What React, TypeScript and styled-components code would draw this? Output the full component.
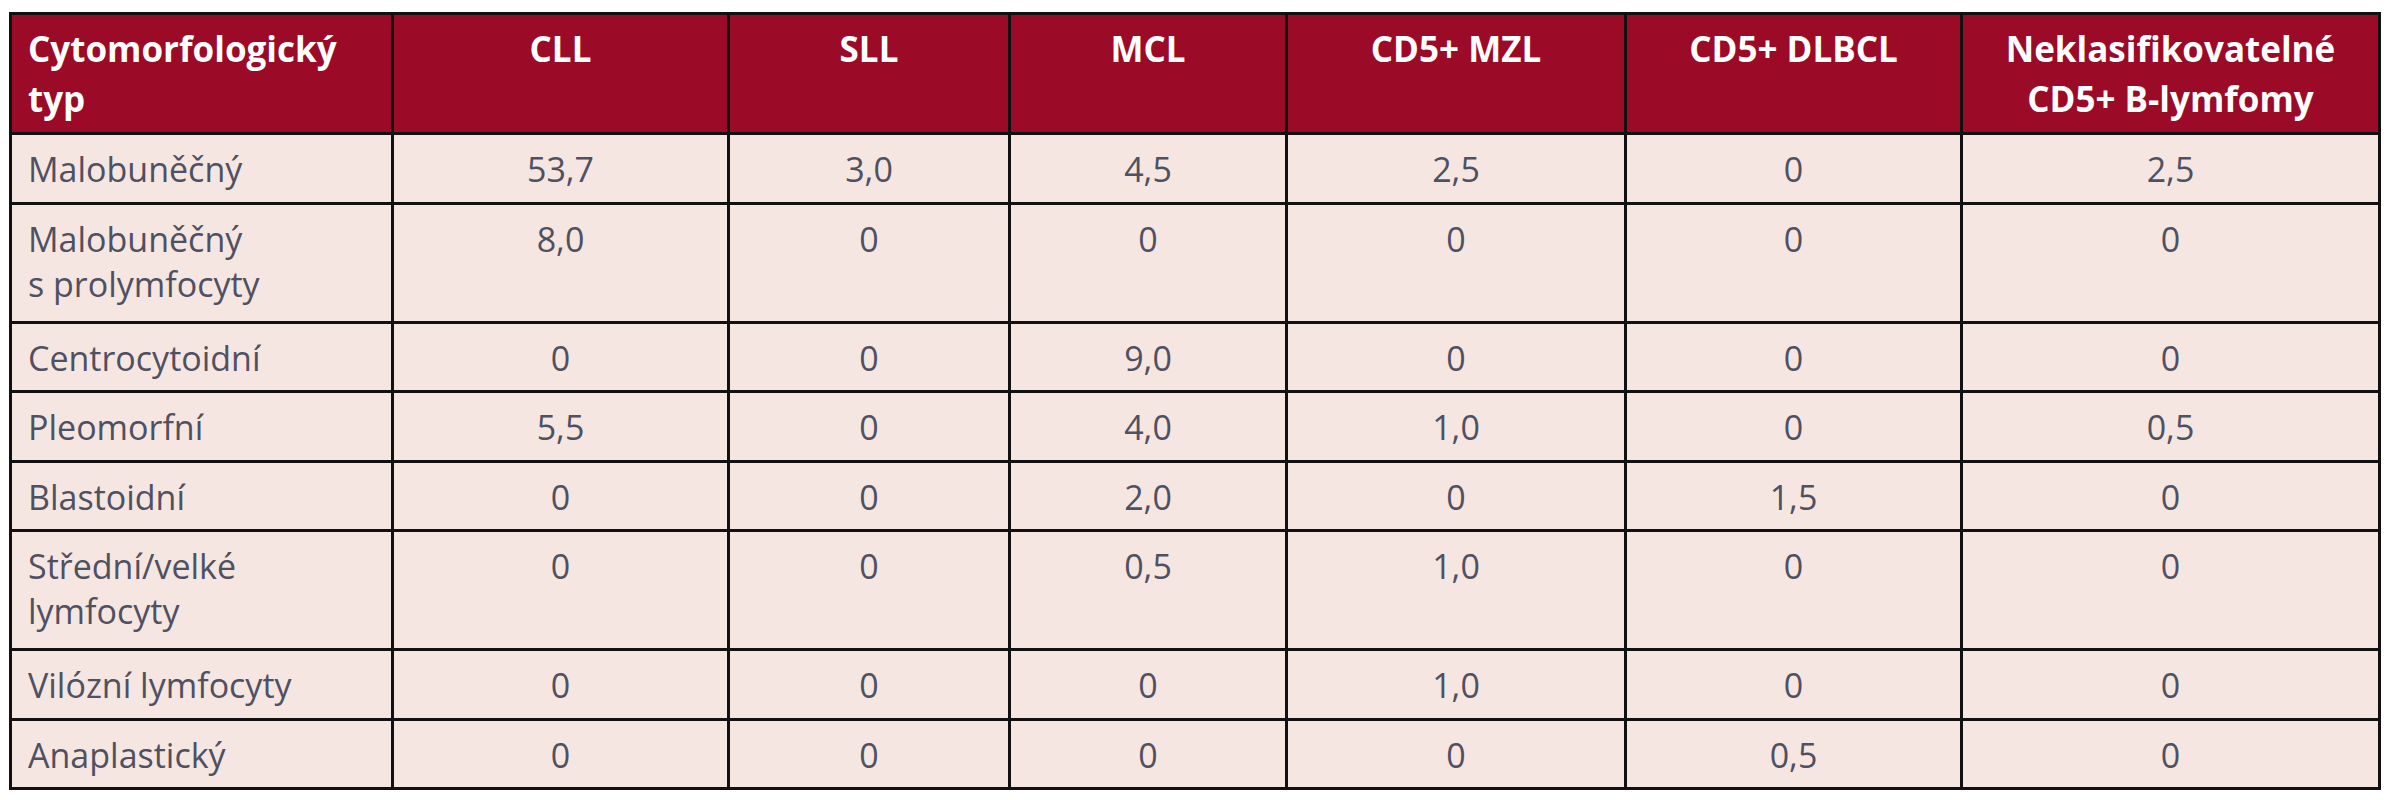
import React from 'react';
import styled, { createGlobalStyle } from 'styled-components';

const GlobalStyle = createGlobalStyle`
  html, body {
    margin: 0;
    padding: 0;
    background: #ffffff;
  }
  body {
    font-family: "Open Sans", "DejaVu Sans", sans-serif;
  }
`;

const Page = styled.div`
  padding: 12px 0 0 9px;
`;

const Table = styled.table`
  border-collapse: collapse;
  table-layout: fixed;
  width: 2369px;
  border: 3px solid #111111;
`;

const Col = styled.col<{ $w: number }>`
  width: ${(p) => p.$w}px;
`;

const HeadRow = styled.tr`
  height: 120px;
  background: #9b0a26;
`;

const BodyRow = styled.tr<{ $tall: boolean }>`
  height: ${(p) => (p.$tall ? 119 : 69.5)}px;
  background: #f5e6e2;
`;

const HeadCell = styled.th<{ $left?: boolean }>`
  border: 3px solid #111111;
  padding: 9px 16px 0;
  vertical-align: top;
  text-align: ${(p) => (p.$left ? 'left' : 'center')};
  font-family: "Open Sans", "DejaVu Sans", sans-serif;
  font-weight: 700;
  font-size: 35px;
  line-height: 50px;
  color: #ffffff;
`;

const Cell = styled.td<{ $left?: boolean }>`
  border: 3px solid #111111;
  padding: 12px 16px 0;
  vertical-align: top;
  text-align: ${(p) => (p.$left ? 'left' : 'center')};
  font-family: "Open Sans", "DejaVu Sans", sans-serif;
  font-weight: 400;
  font-size: 34px;
  line-height: 45px;
  color: #4f5060;
`;

const widths = [382, 336, 281, 277, 339, 336, 418];

const headers: React.ReactNode[] = [
  <>Cytomorfologický<br />typ</>,
  'CLL',
  'SLL',
  'MCL',
  'CD5+ MZL',
  'CD5+ DLBCL',
  <>Neklasifikovatelné<br />CD5+ B-lymfomy</>,
];

type Row = { label: string[]; values: string[] };

const rows: Row[] = [
  { label: ['Malobuněčný'], values: ['53,7', '3,0', '4,5', '2,5', '0', '2,5'] },
  { label: ['Malobuněčný', 's prolymfocyty'], values: ['8,0', '0', '0', '0', '0', '0'] },
  { label: ['Centrocytoidní'], values: ['0', '0', '9,0', '0', '0', '0'] },
  { label: ['Pleomorfní'], values: ['5,5', '0', '4,0', '1,0', '0', '0,5'] },
  { label: ['Blastoidní'], values: ['0', '0', '2,0', '0', '1,5', '0'] },
  { label: ['Střední/velké', 'lymfocyty'], values: ['0', '0', '0,5', '1,0', '0', '0'] },
  { label: ['Vilózní lymfocyty'], values: ['0', '0', '0', '1,0', '0', '0'] },
  { label: ['Anaplastický'], values: ['0', '0', '0', '0', '0,5', '0'] },
];

export default function App() {
  return (
    <>
      <GlobalStyle />
      <Page>
        <Table>
          <colgroup>
            {widths.map((w, i) => (
              <Col key={i} $w={w} />
            ))}
          </colgroup>
          <thead>
            <HeadRow>
              {headers.map((h, i) => (
                <HeadCell key={i} $left={i === 0}>
                  {h}
                </HeadCell>
              ))}
            </HeadRow>
          </thead>
          <tbody>
            {rows.map((r, ri) => (
              <BodyRow key={ri} $tall={r.label.length > 1}>
                <Cell $left>
                  {r.label.map((l, li) => (
                    <React.Fragment key={li}>
                      {li > 0 && <br />}
                      {l}
                    </React.Fragment>
                  ))}
                </Cell>
                {r.values.map((v, vi) => (
                  <Cell key={vi}>{v}</Cell>
                ))}
              </BodyRow>
            ))}
          </tbody>
        </Table>
      </Page>
    </>
  );
}
